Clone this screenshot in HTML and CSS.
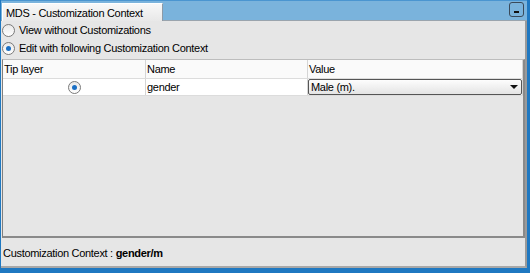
FILE: index.html
```html
<!DOCTYPE html>
<html lang="en">
<head>
    <meta charset="UTF-8">
    <title>MDS - Customization Context</title>
    <link rel="stylesheet" href="styles.css">
</head>
<body>
    <div class="window">
        <div class="titlebar">
            <div class="tab">MDS - Customization Context</div>
            <div class="min-btn"><span></span></div>
        </div>
        <div class="content">
            <label class="radio-row"><span class="radio"></span>View without Customizations</label>
            <label class="radio-row"><span class="radio checked"></span>Edit with following Customization Context</label>
            <div class="table-box">
                <table>
                    <tr>
                        <th class="col-tip">Tip layer</th>
                        <th class="col-name">Name</th>
                        <th>Value</th>
                    </tr>
                    <tr>
                        <td class="center"><span class="radio checked small"></span></td>
                        <td>gender</td>
                        <td class="combo-cell"><div class="combo">Male (m).<span class="arrow"></span></div></td>
                    </tr>
                </table>
            </div>
            <div class="footer"><span>Customization Context : <b>gender/m</b></span></div>
        </div>
    </div>
</body>
</html>
```

FILE: styles.css
```css
body {
    margin: 0;
    background: #1f78c1;
    font-family: "Liberation Sans", Arial, sans-serif;
    font-size: 11px;
    letter-spacing: -0.3px;
    color: #000;
}
.window {
    width: 526px;
    height: 268px;
    margin-left: 1px;
    display: flex;
    flex-direction: column;
}
.titlebar {
    height: 21px;
    background: #7ab3dc;
    border-top: 1px solid #4a95d0;
    box-sizing: border-box;
    display: flex;
    align-items: flex-end;
    justify-content: space-between;
    border-bottom: 1px solid #9aa4ad;
}
.tab {
    width: 161px;
    height: 18px;
    margin-left: 1px;
    box-sizing: border-box;
    padding: 3px 0 0 3px;
    background: linear-gradient(#f8f8f8, #e8e8e8);
    border-top: 1px solid #fff;
    border-left: 1px solid #fff;
    border-right: 1px solid #8d9aa6;
    margin-bottom: -1px;
}
.min-btn {
    width: 13px;
    height: 13px;
    border: 1px solid #3a4a5a;
    border-radius: 3px;
    margin: 0 3px 3px 0;
    position: relative;
}
.min-btn span {
    position: absolute;
    left: 4px;
    bottom: 3px;
    width: 5px;
    height: 2px;
    background: #111;
}
.content {
    flex: 1;
    background: #e6e6e6;
    border-right: 2px solid #9a9a9a;
    border-bottom: 2px solid #a8a8a8;
    display: flex;
    flex-direction: column;
}
.radio-row {
    display: flex;
    align-items: center;
    height: 18px;
    padding-left: 1px;
}
.radio {
    width: 11px;
    height: 11px;
    border: 1px solid #7a7a7a;
    border-radius: 50%;
    background: linear-gradient(#e8e8e8, #ffffff);
    margin-right: 4px;
    position: relative;
    display: inline-block;
}
.radio.checked::after {
    content: "";
    position: absolute;
    left: 3px;
    top: 3px;
    width: 5px;
    height: 5px;
    border-radius: 50%;
    background: #1a6fc4;
}
.radio.small {
    margin-right: 0;
    vertical-align: middle;
}
.table-box {
    height: 179px;
    margin: 2px 0 0 1px;
    border-top: 1px solid #bdbdbd;
    border-left: 1px solid #7f7f7f;
    border-right: 2px solid #8a8a8a;
    border-bottom: 2px solid #8a8a8a;
    box-sizing: border-box;
}
table {
    width: 100%;
    border-collapse: collapse;
}
th, td {
    font-weight: normal;
    text-align: left;
    padding: 0 1px;
    border-right: 1px solid #d5d5d5;
    border-bottom: 1px solid #dcdcdc;
    background: #fff;
    height: 15px;
}
th {
    height: 18px;
    background: #fafafa;
}
.col-tip { width: 140px; }
.col-name { width: 159px; }
td.center { text-align: center; }
.combo-cell { padding: 0; }
.combo {
    height: 14px;
    border: 1px solid #555;
    border-radius: 2px;
    background: linear-gradient(#fdfdfd, #e4e4e4);
    padding-left: 2px;
    display: flex;
    align-items: center;
    justify-content: space-between;
}
.arrow {
    width: 0;
    height: 0;
    border-left: 4px solid transparent;
    border-right: 4px solid transparent;
    border-top: 4px solid #111;
    margin-right: 3px;
}
.footer {
    flex: 1;
    display: flex;
    align-items: center;
    padding: 2px 0 0 2px;
}
```
